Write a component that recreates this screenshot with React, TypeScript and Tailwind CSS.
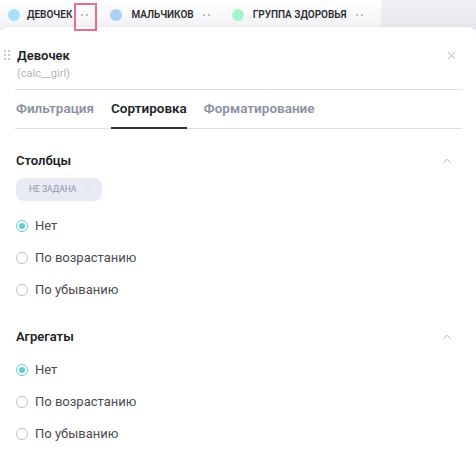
import React from 'react';
import { X, ChevronUp, ChevronDown } from 'lucide-react';

const font = { fontFamily: 'Roboto, "Noto Sans", sans-serif' };

const series = [
  { label: 'ДЕВОЧЕК', color: 'bg-[#a9e0fb]' },
  { label: 'МАЛЬЧИКОВ', color: 'bg-[#aed0f8]' },
  { label: 'ГРУППА ЗДОРОВЬЯ', color: 'bg-[#a5f3d0]' },
];

const options = ['Нет', 'По возрастанию', 'По убыванию'];

function Dots() {
  return (
    <span className="flex gap-[3px] ml-[9px]">
      <span className="w-[2px] h-[2px] rounded-full bg-[#a3a7b8]" />
      <span className="w-[2px] h-[2px] rounded-full bg-[#a3a7b8]" />
    </span>
  );
}

function Radio({ label, checked }: { label: string; checked?: boolean }) {
  return (
    <label className="flex items-center gap-[7px] h-[20px]">
      <span
        className={
          'w-[12px] h-[12px] rounded-full border flex items-center justify-center ' +
          (checked ? 'border-[#5fcfcf]' : 'border-[#b9bccb]')
        }
      >
        {checked && <span className="w-[6px] h-[6px] rounded-full bg-[#5fcfcf]" />}
      </span>
      <span className="text-[13px] text-[#4a4a50]">{label}</span>
    </label>
  );
}

function Section({ title, withSelect }: { title: string; withSelect?: boolean }) {
  return (
    <div>
      <div className="flex items-center justify-between pr-[22px] h-[18px]">
        <h3 className="text-[13px] font-semibold text-[#222]">{title}</h3>
        <ChevronUp className="w-[14px] h-[14px] text-[#a4a7bb]" strokeWidth={1.5} />
      </div>
      {withSelect && (
        <button className="mt-[8px] flex items-center gap-[6px] h-[23px] pl-[13px] pr-[9px] rounded-[8px] bg-[#e8ebf3] text-[8.5px] text-[#8d92a3] uppercase">
          Не задана
          <ChevronDown className="w-[11px] h-[11px] text-[#c9ccd8]" strokeWidth={1.5} />
        </button>
      )}
      <div className={'flex flex-col gap-[12px] ' + (withSelect ? 'mt-[15px]' : 'mt-[14px]')}>
        {options.map((o, i) => (
          <Radio key={o} label={o} checked={i === 0} />
        ))}
      </div>
    </div>
  );
}

export default function App() {
  return (
    <div className="relative w-[476px] h-[453px] overflow-hidden bg-white" style={font}>
      {/* series chips */}
      <div className="flex h-[30px]">
        <div className="flex items-center flex-1 pl-[8px] pb-[1px] bg-gradient-to-b from-white to-[#f1f1f4]">
          {series.map((s, i) => (
            <div key={s.label} className={'flex items-center ' + (i > 0 ? 'ml-[22px]' : '')}>
              <span className={'w-[12px] h-[12px] rounded-full ' + s.color} />
              <span className={'text-[10px] font-semibold text-[#2d2d33] ' + (i > 0 ? 'ml-[9px]' : 'ml-[7px]')}>
                {s.label}
              </span>
              <Dots />
            </div>
          ))}
        </div>
        <div className="w-[95px] bg-gradient-to-b from-[#eef0f4] to-[#e6e8ee]" />
      </div>

      {/* active chip marker */}
      <div className="absolute left-[74px] top-[3px] w-[23px] h-[28px] border-2 border-[#ee6c8b] z-10" />

      {/* settings panel */}
      <div className="absolute left-0 right-0 top-[27px] bottom-0 bg-white rounded-t-[8px] shadow-[0_-1px_3px_rgba(0,0,0,0.04)]">
        <div className="relative pl-[17px] pr-[14px] pt-[20px]">
          <div className="absolute left-[4px] top-[23px] grid grid-cols-2 gap-x-[2px] gap-y-[2px]">
            {Array.from({ length: 6 }).map((_, i) => (
              <span key={i} className="w-[2px] h-[2px] bg-[#c8c6d8]" />
            ))}
          </div>
          <div className="flex items-start justify-between">
            <div>
              <div className="text-[13px] font-semibold text-[#1e1e22] leading-[18px]">Девочек</div>
              <div className="mt-[1px] text-[11px] text-[#b3b3ba] leading-[15px]">(calc__girl)</div>
            </div>
            <X className="mt-[2px] mr-[4px] w-[13px] h-[13px] text-[#a4a6bb]" strokeWidth={1.5} />
          </div>
        </div>
        <div className="mx-[15px] mt-[8px] mr-[14px] h-px bg-[#dde1e6]" />

        {/* tabs */}
        <div className="mx-[15px] mr-[14px] mt-[8px] flex gap-[17px] border-b border-[#dde1e6] text-[13.5px] leading-[20px] font-semibold">
          <span className="pl-[1px] pb-[10px] text-[#8a90a2]">Фильтрация</span>
          <span className="pb-[8px] text-[#242428] border-b-2 border-[#333] -mb-px">Сортировка</span>
          <span className="pb-[10px] text-[#8a90a2]">Форматирование</span>
        </div>

        <div className="pl-[16px] pt-[23px] flex flex-col gap-[28px]">
          <Section title="Столбцы" withSelect />
          <Section title="Агрегаты" />
        </div>
      </div>
    </div>
  );
}
